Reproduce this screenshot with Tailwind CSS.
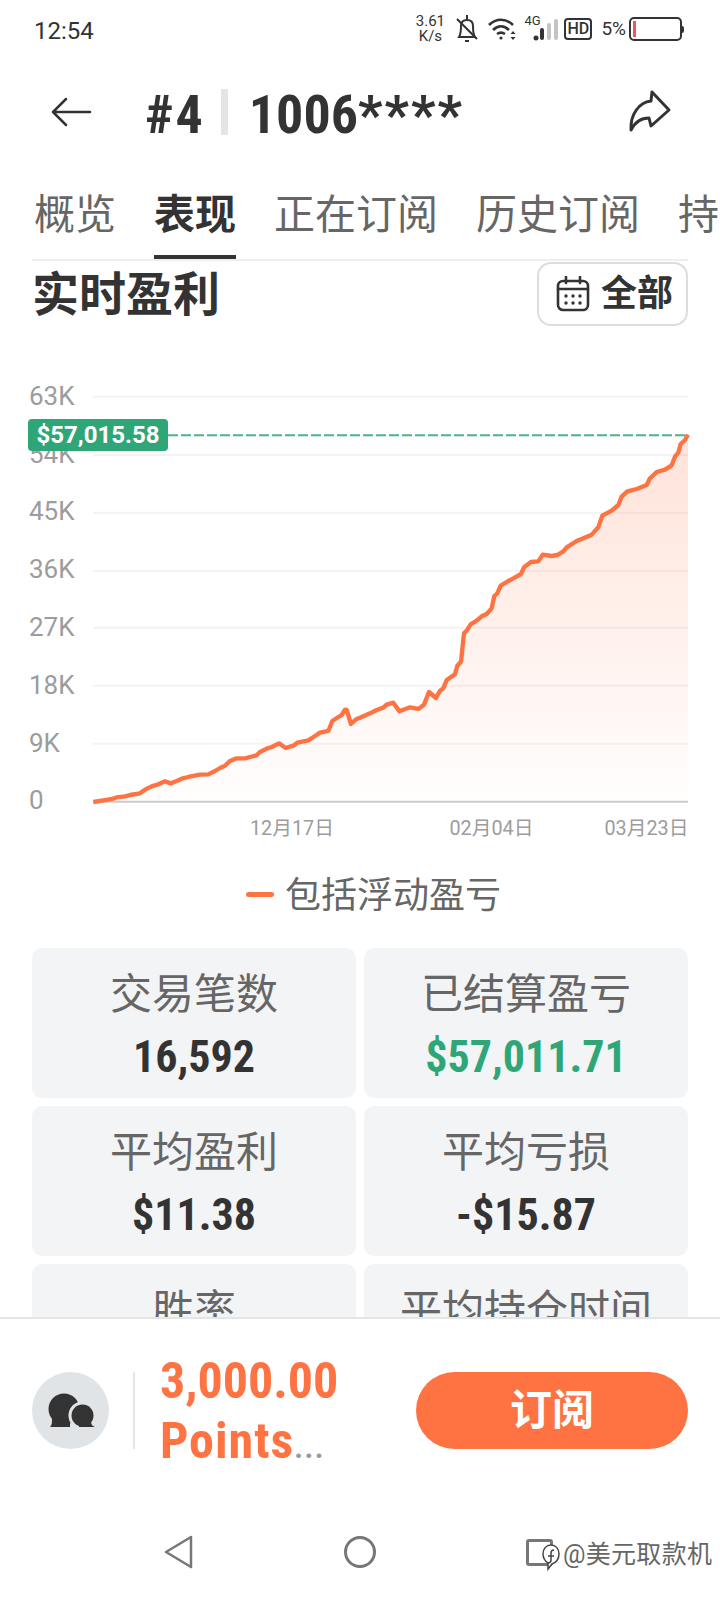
<!DOCTYPE html>
<html>
<head>
  <meta charset="utf-8">
  <meta name="viewport" content="width=device-width">
  <title>#4 1006****</title>
  <script src="https://cdn.jsdelivr.net/npm/@tailwindcss/browser@4"></script>
</head>
<body class="bg-white">
<div class="w-[720px] h-[1600px] overflow-hidden flex flex-col bg-white text-[#333] font-['Roboto','Noto_Sans_CJK_SC',sans-serif]">

  <!-- scrolling page, the stat cards run under the bottom bar -->
  <div class="h-[1317px] overflow-hidden">

    <!-- status bar -->
    <div class="h-[58px] flex items-center pl-[34px] pr-[36px]">
      <span class="text-[24px] pt-[3px]">12:54</span>
      <div class="ml-auto flex items-center h-[30px]">
        <div class="w-[30px] text-center text-[15px] leading-[15px] mr-[10px]">3.61<br>K/s</div>
        <svg class="w-[24px] h-[30px] mr-[9px]" viewBox="0 0 24 30" fill="none" stroke="#333" stroke-width="2"><path d="M4 23c2-3 2-7 2-11 0-4 2-6 6-6s6 2 6 6c0 4 0 8 2 11z"/><path d="M12 1v4M10 27h4M2 5l20 20"/></svg>
        <svg class="w-[28px] h-[24px] mr-[8px]" viewBox="0 0 28 24" fill="none" stroke="#333" stroke-width="2.600"><path d="M1 8c7-7 17-7 24 0M5 13c5-5 11-5 16 0M9 17c3-2 5-2 8 0"/><circle cx="13" cy="21" r="1.600" fill="#333" stroke="none"/><path d="M25 14l-2.500 3h5zM25 23l-2.500-3h5z" fill="#333" stroke="none"/></svg>
        <div class="relative w-[34px] h-[26px] mr-[6px]">
          <span class="absolute left-0 top-[-2px] text-[13px] leading-[14px]">4G</span>
          <svg class="w-[34px] h-[26px]" viewBox="0 0 34 26"><circle cx="12" cy="22" r="2.500" fill="#333"/><rect x="16" y="12" width="4" height="12" rx="2" fill="#333"/><rect x="23" y="7" width="4" height="17" rx="2" fill="#c4c4c4"/><rect x="30" y="3" width="4" height="21" rx="2" fill="#c4c4c4"/></svg>
        </div>
        <div class="w-[28px] h-[22px] border-2 border-[#333] rounded-[4px] flex items-center justify-center text-[16px] font-medium leading-none mr-[9px]">HD</div>
        <span class="text-[19px] mr-[3px]">5%</span>
        <div class="w-[53px] h-[24px] border-2 border-[#333] rounded-[5px] pl-[2px] py-[2px]"><div class="w-[3px] h-full bg-[#f25555]"></div></div>
        <div class="w-[2px] h-[7px] bg-[#333] rounded-r-[2px]"></div>
      </div>
    </div>

    <!-- title bar -->
    <div class="h-[108px] flex items-center">
      <svg class="w-[42px] h-[30px] ml-[50px]" viewBox="0 0 42 30" fill="none" stroke="#333" stroke-width="2.500" stroke-linecap="round" stroke-linejoin="round"><path d="M40 15H3M16 2L3 15l13 13"/></svg>
      <span class="ml-[53px] pt-[5px] text-[54px] leading-none font-bold font-stretch-[85%] tracking-[2px]">#4</span>
      <div class="w-[7px] h-[46px] bg-[#e5e5e5] ml-[16px]"></div>
      <span class="ml-[21px] pt-[5px] text-[54px] leading-none font-bold font-stretch-[85%] whitespace-nowrap">1006<span class="tracking-[2px]">****</span></span>
      <svg class="w-[44px] h-[44px] ml-auto mr-[48px]" viewBox="0 0 44 44" fill="none" stroke="#333" stroke-width="3" stroke-linejoin="round" stroke-linecap="round"><path d="M24 2L41 20 23 36 21 28C13 28 7 32 3 40 2 25 11 12 23 11Z"/></svg>
    </div>

    <!-- tabs -->
    <div class="h-[95px] mx-[32px] border-b-2 border-[#eeeeee] flex gap-[38px] pl-[2px] text-[41px] text-[#666]">
      <div class="h-full leading-[98px] whitespace-nowrap">概览</div>
      <div class="h-[93px] leading-[98px] whitespace-nowrap font-bold text-[#333] border-b-4 border-[#333]">表现</div>
      <div class="h-full leading-[98px] whitespace-nowrap">正在订阅</div>
      <div class="h-full leading-[98px] whitespace-nowrap">历史订阅</div>
      <div class="h-full leading-[98px] whitespace-nowrap">持仓</div>
    </div>

    <!-- heading -->
    <div class="mt-[1px] mx-[32px] h-[64px] flex items-center justify-between">
      <h2 class="text-[47px] font-bold leading-none">实时盈利</h2>
      <div class="w-[151px] h-[64px] border-2 border-[#dddddd] rounded-[14px] flex items-center pl-[17px] gap-[11px]">
        <svg class="w-[34px] h-[36px]" viewBox="0 0 34 36" fill="none" stroke="#333" stroke-width="2.600" stroke-linecap="round"><rect x="2" y="5" width="30" height="29" rx="5"/><path d="M2 13h30M10 1v6M24 1v6"/><g fill="#333" stroke="none"><circle cx="10" cy="20" r="1.700"/><circle cx="17" cy="20" r="1.700"/><circle cx="24" cy="20" r="1.700"/><circle cx="10" cy="27" r="1.700"/><circle cx="17" cy="27" r="1.700"/><circle cx="24" cy="27" r="1.700"/></g></svg>
        <span class="text-[36px] font-bold leading-none whitespace-nowrap">全部</span>
      </div>
    </div>

    <!-- chart -->
    <div class="relative mt-[44px] h-[470px]">
      <svg class="w-[720px] h-[470px]" viewBox="0 0 720 470">
        <defs>
          <linearGradient id="area" x1="0" y1="0" x2="0" y2="1">
            <stop offset="0" stop-color="#ff7242" stop-opacity="0.2"/>
            <stop offset="1" stop-color="#ff7242" stop-opacity="0.01"/>
          </linearGradient>
        </defs>
        <g stroke="#f3f3f3" stroke-width="2">
          <path d="M93 26.700H688M93 85H688M93 142.700H688M93 201H688M93 257.700H688M93 315.700H688M93 373.700H688"/>
        </g>
        <path d="M93 431.700H688" stroke="#cccccc" stroke-width="2"/>
        <g fill="#9c9c9c" font-size="26">
          <text x="29" y="35">63K</text>
          <text x="29" y="93">54K</text>
          <text x="29" y="150">45K</text>
          <text x="29" y="208">36K</text>
          <text x="29" y="266">27K</text>
          <text x="29" y="324">18K</text>
          <text x="29" y="382">9K</text>
          <text x="29" y="439">0</text>
        </g>
        <g fill="#9c9c9c" font-size="19.750">
          <text x="250" y="465">12月17日</text>
          <text x="449.500" y="465">02月04日</text>
          <text x="604.500" y="465">03月23日</text>
        </g>
        <path d="M168 65.300H688" stroke="#2fa678" stroke-opacity="0.85" stroke-width="2" stroke-dasharray="10 3"/>
        <g transform="scale(0.33333)">
          <path fill="url(#area)" d="M280 1296L310 1291 340 1286 350 1282 375 1279 390 1275 420 1270 435 1259 455 1249 475 1243 495 1234 513 1240 530 1233 545 1226 565 1221 600 1214 625 1213 645 1203 660 1194 675 1187 690 1173 710 1165 735 1165 750 1161 770 1156 780 1146 800 1136 815 1131 837 1120 857 1134 880 1127 892 1118 925 1111 945 1098 960 1088 985 1083 997 1053 1015 1041 1025 1035 1035 1019 1040 1020 1053 1062 1070 1047 1080 1043 1110 1030 1130 1020 1150 1013 1160 1004 1180 998 1198 1024 1230 1012 1255 1017 1272 1004 1287 966 1308 984 1320 962 1330 955 1340 930 1365 913 1372 887 1383 875 1392 790 1400 782 1412 763 1430 752 1445 739 1460 732 1475 715 1483 678 1492 670 1502 647 1525 633 1540 625 1563 612 1572 592 1593 576 1615 574 1628 554 1655 558 1672 555 1690 544 1700 532 1730 513 1775 494 1795 472 1807 437 1835 422 1855 405 1865 380 1882 364 1910 357 1940 345 1950 325 1970 306 1995 299 2015 286 2025 260 2035 248 2042 222 2055 210 2064 194V1296Z"/>
          <path fill="none" stroke="#ff7242" stroke-width="13" stroke-linejoin="round" d="M280 1296L310 1291 340 1286 350 1282 375 1279 390 1275 420 1270 435 1259 455 1249 475 1243 495 1234 513 1240 530 1233 545 1226 565 1221 600 1214 625 1213 645 1203 660 1194 675 1187 690 1173 710 1165 735 1165 750 1161 770 1156 780 1146 800 1136 815 1131 837 1120 857 1134 880 1127 892 1118 925 1111 945 1098 960 1088 985 1083 997 1053 1015 1041 1025 1035 1035 1019 1040 1020 1053 1062 1070 1047 1080 1043 1110 1030 1130 1020 1150 1013 1160 1004 1180 998 1198 1024 1230 1012 1255 1017 1272 1004 1287 966 1308 984 1320 962 1330 955 1340 930 1365 913 1372 887 1383 875 1392 790 1400 782 1412 763 1430 752 1445 739 1460 732 1475 715 1483 678 1492 670 1502 647 1525 633 1540 625 1563 612 1572 592 1593 576 1615 574 1628 554 1655 558 1672 555 1690 544 1700 532 1730 513 1775 494 1795 472 1807 437 1835 422 1855 405 1865 380 1882 364 1910 357 1940 345 1950 325 1970 306 1995 299 2015 286 2025 260 2035 248 2042 222 2055 210 2064 194"/>
        </g>
      </svg>
      <div class="absolute left-[28px] top-[49px] w-[140px] h-[32px] bg-[#2fa678] rounded-[4px] text-white text-[24px] font-bold font-stretch-[90%] leading-[33px] text-center">$57,015.58</div>
    </div>

    <!-- legend -->
    <div class="h-[108px] flex items-center pl-[246px]">
      <div class="w-[28px] h-[5px] rounded-full bg-[#ff7242]"></div>
      <span class="ml-[11px] pt-[4px] text-[36px] text-[#666] leading-none">包括浮动盈亏</span>
    </div>

    <!-- stat cards -->
    <div class="mx-[32px] grid grid-cols-2 gap-2">
      <div class="h-[150px] rounded-[10px] bg-[#f3f4f6] flex flex-col items-center pt-[23px]">
        <div class="text-[42px] text-[#666] leading-[48px]">交易笔数</div>
        <div class="mt-[14px] text-[44px] font-bold leading-[48px] font-stretch-[85%]">16,592</div>
      </div>
      <div class="h-[150px] rounded-[10px] bg-[#f3f4f6] flex flex-col items-center pt-[23px]">
        <div class="text-[42px] text-[#666] leading-[48px]">已结算盈亏</div>
        <div class="mt-[14px] text-[44px] font-bold leading-[48px] font-stretch-[85%] text-[#2fa678]">$57,011.71</div>
      </div>
      <div class="h-[150px] rounded-[10px] bg-[#f3f4f6] flex flex-col items-center pt-[23px]">
        <div class="text-[42px] text-[#666] leading-[48px]">平均盈利</div>
        <div class="mt-[14px] text-[44px] font-bold leading-[48px] font-stretch-[85%]">$11.38</div>
      </div>
      <div class="h-[150px] rounded-[10px] bg-[#f3f4f6] flex flex-col items-center pt-[23px]">
        <div class="text-[42px] text-[#666] leading-[48px]">平均亏损</div>
        <div class="mt-[14px] text-[44px] font-bold leading-[48px] font-stretch-[85%]">-$15.87</div>
      </div>
      <div class="h-[150px] rounded-[10px] bg-[#f3f4f6] flex flex-col items-center pt-[23px]">
        <div class="text-[42px] text-[#666] leading-[48px]">胜率</div>
      </div>
      <div class="h-[150px] rounded-[10px] bg-[#f3f4f6] flex flex-col items-center pt-[23px]">
        <div class="text-[42px] text-[#666] leading-[48px]">平均持仓时间</div>
      </div>
    </div>
  </div>

  <!-- bottom bar -->
  <div class="flex-1 border-t-2 border-[#e5e5e5] bg-white">
    <div class="mt-[31px] h-[120px] flex items-center pl-[32px] pr-[32px]">
      <div class="w-[77px] h-[77px] rounded-full bg-[#e1e4e7]">
        <svg class="w-[77px] h-[77px]" viewBox="0 0 77 77"><circle cx="32" cy="37" r="15.500" fill="#333"/><path d="M20 46C20 51 20 53 18 55H38V45Z" fill="#333"/><circle cx="50.500" cy="43.500" r="14" fill="#e1e4e7"/><circle cx="50.500" cy="43.500" r="11" fill="#333"/><path d="M59 48C59 52 60 54 63 55H47V48Z" fill="#333"/></svg>
      </div>
      <div class="w-[2px] h-[77px] bg-[#e5e5e5] ml-[24px]"></div>
      <div class="ml-[25px] pt-[9px] text-[50px] font-bold leading-[60px] font-stretch-[85%] text-[#ff7242] whitespace-nowrap">
        <div>3,000.00</div>
        <div class="tracking-[1px]">Points<span class="text-[30px] tracking-[1.500px] text-[#999]">...</span></div>
      </div>
      <div class="ml-auto w-[272px] h-[77px] rounded-full bg-[#ff7242] flex items-center justify-center text-white text-[42px] font-bold">订阅</div>
    </div>

    <!-- system nav -->
    <div class="relative mt-[52px] h-[60px] flex items-center justify-center">
      <div class="w-[181px] flex justify-center">
        <svg class="w-[30px] h-[34px]" viewBox="0 0 30 34" fill="none" stroke="#777" stroke-width="2.500" stroke-linejoin="round"><path d="M27 2L2 17l25 15z"/></svg>
      </div>
      <div class="w-[181px] flex justify-center">
        <div class="w-[32px] h-[32px] rounded-full border-[3px] border-[#777]"></div>
      </div>
      <div class="w-[181px] flex justify-center">
        <div class="w-[27px] h-[27px] mr-[3px] border-[3px] border-[#777] rounded-[3px]"></div>
      </div>
      <!-- watermark -->
      <div class="absolute left-[541px] top-[17px] flex items-center text-[25px] leading-none text-[#666] whitespace-nowrap tracking-[0.300px] [text-shadow:1px_1px_0_#fff,-1px_-1px_0_#fff,1px_-1px_0_#fff,-1px_1px_0_#fff]">
        <svg class="w-[20px] h-[30px] mr-[2px] translate-y-[3px]" viewBox="0 0 20 30" fill="#fff" stroke="#444" stroke-width="1.500"><path d="M10 3c5 0 8 4 8 9s-3 9-7 10l-4 5v-6c-3-2-5-5-5-9C2 7 5 3 10 3z"/><path d="M13 8c-2 0-3 1-3 3v7c0 2-1 3-3 3M7 14h6" fill="none"/></svg>
        <span>@美元取款机</span>
      </div>
    </div>
  </div>
</div>
</body>
</html>
